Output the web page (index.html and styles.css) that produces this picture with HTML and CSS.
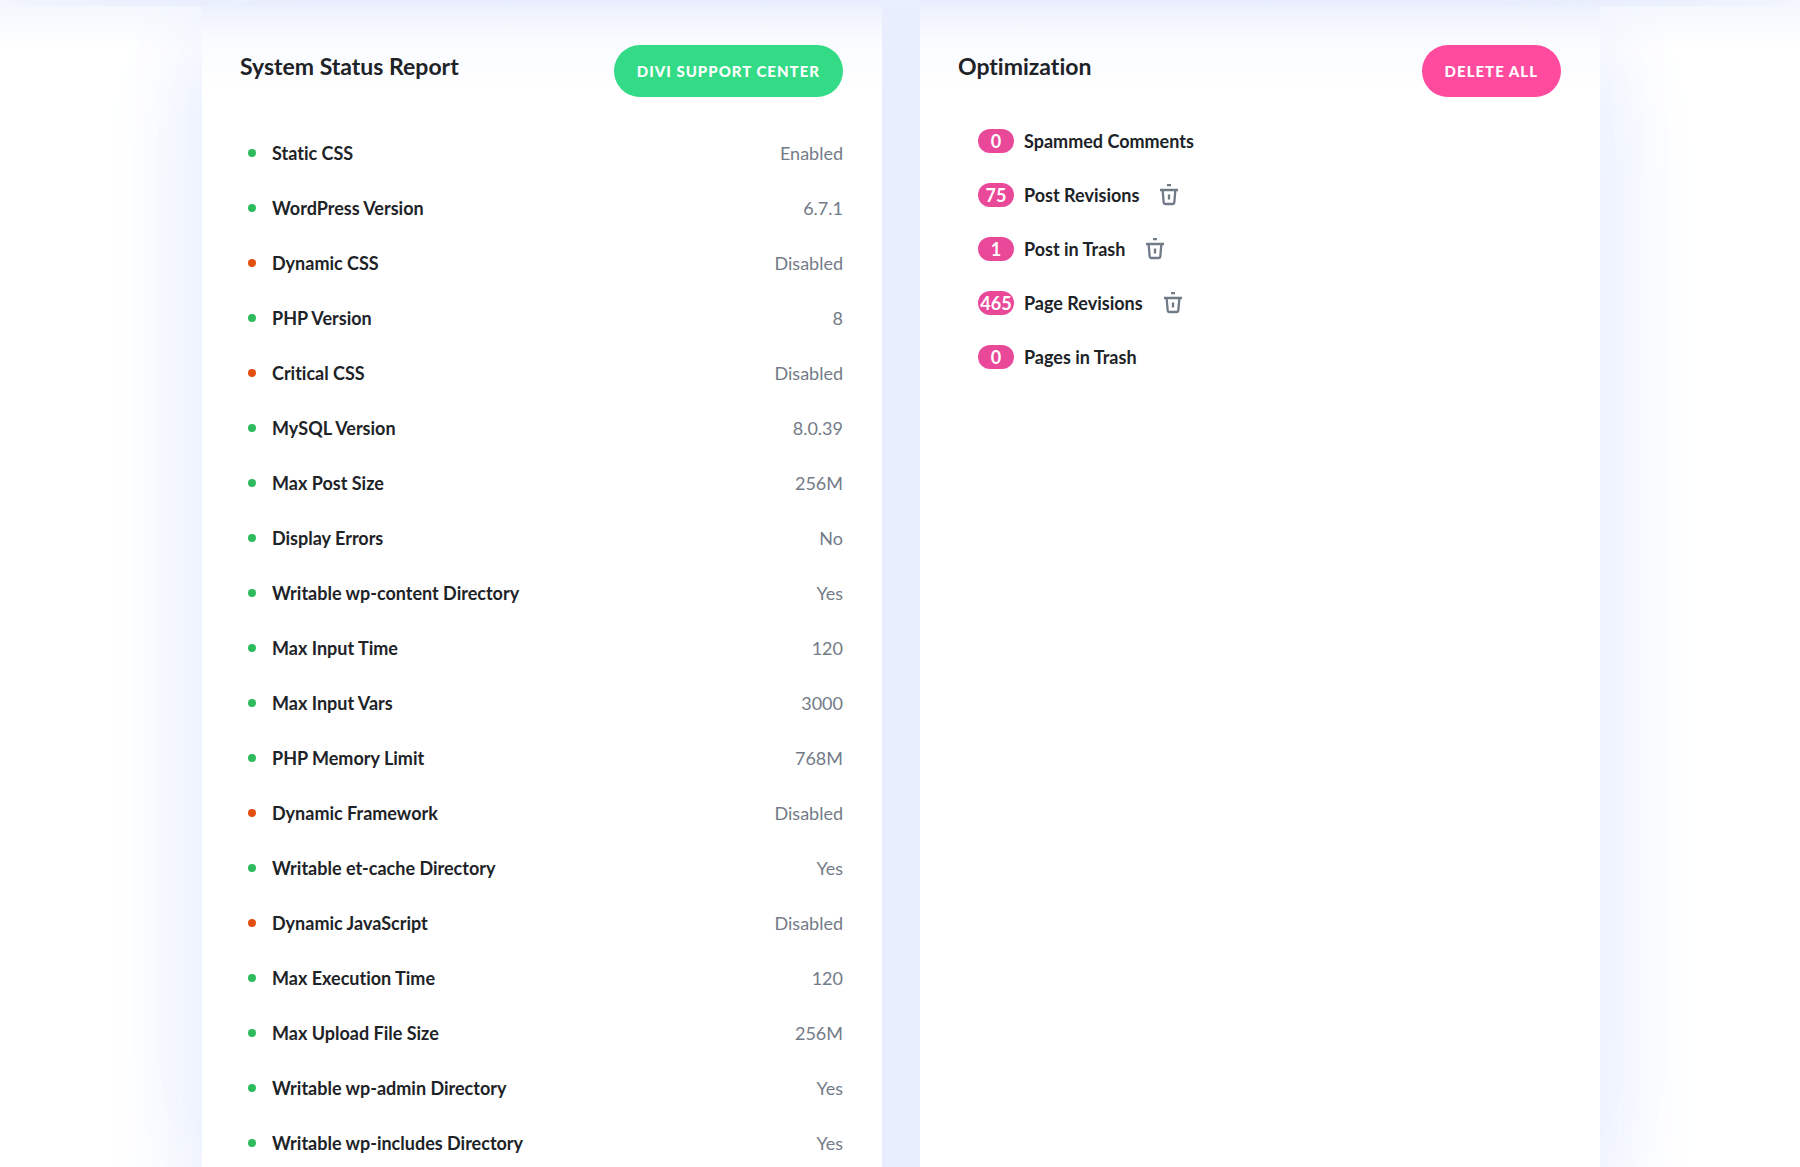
FILE: index.html
```
<!DOCTYPE html>
<html lang="en">
<head>
	<meta charset="UTF-8">
	<title>System Status</title>
	<link rel="stylesheet" href="styles.css">
</head>
<body>
<div class="top-edge"></div>
<main class="panels">
	<section class="panel">
		<header class="panel-head">
			<h2>System Status Report</h2>
			<a href="#" class="btn btn-green">Divi Support Center</a>
		</header>
		<table class="status">
			<tr><th scope="row">Static CSS</th><td>Enabled</td></tr>
			<tr><th scope="row">WordPress Version</th><td>6.7.1</td></tr>
			<tr class="off"><th scope="row">Dynamic CSS</th><td>Disabled</td></tr>
			<tr><th scope="row">PHP Version</th><td>8</td></tr>
			<tr class="off"><th scope="row">Critical CSS</th><td>Disabled</td></tr>
			<tr><th scope="row">MySQL Version</th><td>8.0.39</td></tr>
			<tr><th scope="row">Max Post Size</th><td>256M</td></tr>
			<tr><th scope="row">Display Errors</th><td>No</td></tr>
			<tr><th scope="row">Writable wp-content Directory</th><td>Yes</td></tr>
			<tr><th scope="row">Max Input Time</th><td>120</td></tr>
			<tr><th scope="row">Max Input Vars</th><td>3000</td></tr>
			<tr><th scope="row">PHP Memory Limit</th><td>768M</td></tr>
			<tr class="off"><th scope="row">Dynamic Framework</th><td>Disabled</td></tr>
			<tr><th scope="row">Writable et-cache Directory</th><td>Yes</td></tr>
			<tr class="off"><th scope="row">Dynamic JavaScript</th><td>Disabled</td></tr>
			<tr><th scope="row">Max Execution Time</th><td>120</td></tr>
			<tr><th scope="row">Max Upload File Size</th><td>256M</td></tr>
			<tr><th scope="row">Writable wp-admin Directory</th><td>Yes</td></tr>
			<tr><th scope="row">Writable wp-includes Directory</th><td>Yes</td></tr>
		</table>
	</section>

	<section class="panel">
		<header class="panel-head">
			<h2>Optimization</h2>
			<button type="button" class="btn btn-pink">Delete All</button>
		</header>
		<ul class="cleanup">
			<li><span class="count">0</span> Spammed Comments</li>
			<li><span class="count">75</span> Post Revisions
				<button type="button" class="trash" aria-label="Delete post revisions">
					<svg width="20" height="22" viewBox="0 0 20 22"><path d="M8 1.2h4M1 6h18M3.6 6l1.1 12.6q.1 1.4 1.5 1.4h7.6q1.4 0 1.5-1.4L16.4 6M10 10.5v5"/></svg>
				</button>
			</li>
			<li><span class="count">1</span> Post in Trash
				<button type="button" class="trash" aria-label="Delete posts in trash">
					<svg width="20" height="22" viewBox="0 0 20 22"><path d="M8 1.2h4M1 6h18M3.6 6l1.1 12.6q.1 1.4 1.5 1.4h7.6q1.4 0 1.5-1.4L16.4 6M10 10.5v5"/></svg>
				</button>
			</li>
			<li><span class="count">465</span> Page Revisions
				<button type="button" class="trash" aria-label="Delete page revisions">
					<svg width="20" height="22" viewBox="0 0 20 22"><path d="M8 1.2h4M1 6h18M3.6 6l1.1 12.6q.1 1.4 1.5 1.4h7.6q1.4 0 1.5-1.4L16.4 6M10 10.5v5"/></svg>
				</button>
			</li>
			<li><span class="count">0</span> Pages in Trash</li>
		</ul>
	</section>
</main>
</body>
</html>
```
FILE: styles.css
```
*{
	box-sizing: border-box;
}

html{
	height: 100%;
}

body{
	display: flex;
	flex-direction: column;
	min-height: 100%;
	margin: 0;
	overflow: hidden;
	background: linear-gradient(#f3f6fe, #fff 50px);
	color: #1d2327;
	font-family: Lato, "Liberation Sans", sans-serif;
	font-size: 18px;
	font-variant-ligatures: none;
	line-height: 24px;
}

/* lower edge of the block above the panels */
.top-edge{
	height: 6px;
	background: linear-gradient(90deg, #f3f6fe, #e8eefe 10%, #dce6fc 17%, #dce6fc 84%, #e8eefe 90%, #f3f6fe);
}

.panels{
	display: grid;
	flex: 1;
	grid-template-columns: 1fr 1fr;
	gap: 38px;
	margin: 0 200px 0 202px;
	background: #e8eefe;
	box-shadow: 0 60px 100px #e2eaff, 0 -20px 100px #f3f6ff;
}

.panel{
	padding: 39px 39px 0 38px;
	background: linear-gradient(#edf1fd, #f9fbff 32px, #fff 84px);
}

.panel-head{
	display: flex;
	justify-content: space-between;
	align-items: flex-start;
	height: 80px;
}

h2{
	margin: 5px 0 0;
	font-size: 23px;
	font-weight: 700;
	line-height: 32px;
}

.btn{
	display: flex;
	align-items: center;
	height: 52px;
	padding: 0 23px;
	border: 0;
	border-radius: 26px;
	color: #fff;
	font-family: inherit;
	font-size: 15px;
	font-weight: 900;
	line-height: 24px;
	letter-spacing: 1px;
	text-decoration: none;
	text-transform: uppercase;
	cursor: pointer;
}

.btn-green{
	background: #34db87;
}

.btn-pink{
	background: #ff4a9e;
}

.status{
	width: 100%;
	border-collapse: collapse;
}

.status th,
.status td{
	height: 55px;
	padding: 0;
}

.status th{
	font-weight: 700;
	text-align: left;
}

.status th::before{
	content: "";
	display: inline-block;
	width: 8px;
	height: 8px;
	margin: 0 16px 0 8px;
	border-radius: 50%;
	background: #2dbb5d;
	vertical-align: 3px;
}

.status .off th::before{
	background: #e2500f;
}

.status td{
	color: #737b88;
	text-align: right;
}

.cleanup{
	margin: -11px 0 0;
	padding: 0 0 0 20px;
	list-style: none;
}

.cleanup li{
	display: flex;
	align-items: center;
	gap: 10px;
	height: 54px;
	font-weight: 700;
}

.cleanup .count{
	width: 36px;
	height: 24px;
	border-radius: 12px;
	background: #ea4899;
	color: #fff;
	line-height: 24px;
	text-align: center;
}

.trash{
	display: flex;
	margin-left: 10px;
	padding: 0;
	border: 0;
	background: none;
	cursor: pointer;
}

.trash svg{
	fill: none;
	stroke: #717b88;
	stroke-width: 2.3;
}
```
